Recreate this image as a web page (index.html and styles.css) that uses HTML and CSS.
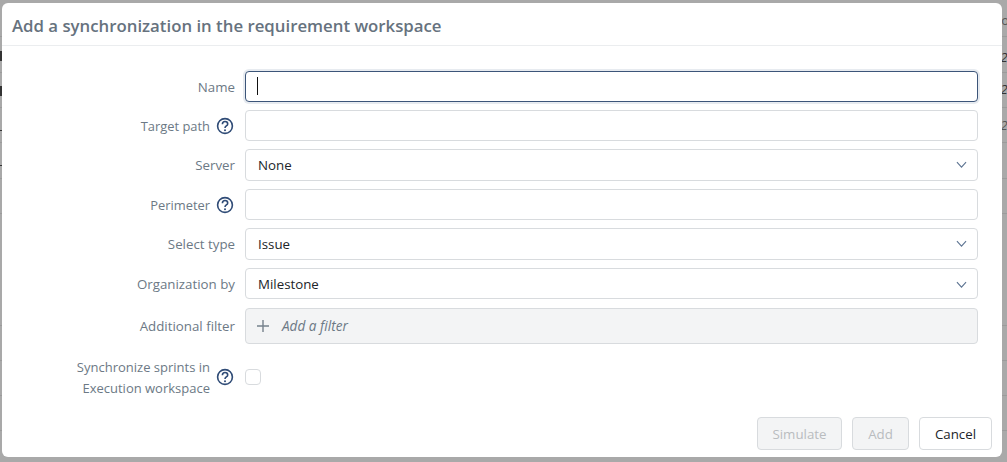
FILE: index.html
```html
<!DOCTYPE html>
<html lang="en">
<head>
<meta charset="utf-8">
<title>Add a synchronization</title>
<link rel="stylesheet" href="styles.css">
</head>
<body>
<div class="backdrop" aria-hidden="true">
  <span class="line l1"></span><span class="line l2"></span><span class="line l3"></span><span class="line l4"></span><span class="line l5"></span><span class="line l6"></span><span class="line l7"></span><span class="line l8"></span><span class="line l9"></span><span class="line l10"></span>
  <span class="frag f1"></span><span class="frag f2"></span><span class="frag f3"></span><span class="frag f4"></span>
  <span class="edge e1">ro</span><span class="edge e2">/2</span><span class="edge e3">/2</span><span class="edge e4">/2</span>
</div>
<div class="modal">
  <header class="modal-head"><h1>Add a synchronization in the requirement workspace</h1></header>
  <form class="modal-body">
    <div class="row row-nudge"><label class="lbl"><span>Name</span></label><div class="control input focus"><span class="caret"></span></div></div>
    <div class="row"><label class="lbl lbl-help"><span>Target path</span><svg class="help" viewBox="0 0 18 18"><circle cx="9" cy="9" r="7.4"/><path d="M6.4 7.2C6.4 5.5 7.6 4.5 9 4.5c1.6 0 2.7 1 2.7 2.4 0 2.1-2.7 2-2.7 4"/><circle class="dot" cx="9" cy="13.2" r="1"/></svg></label><div class="control input"></div></div>
    <div class="row"><label class="lbl"><span>Server</span></label><div class="control input select"><span>None</span><svg class="chev" viewBox="0 0 12 8"><path d="M1 1.2l5 5.6 5-5.6"/></svg></div></div>
    <div class="row"><label class="lbl lbl-help"><span>Perimeter</span><svg class="help" viewBox="0 0 18 18"><circle cx="9" cy="9" r="7.4"/><path d="M6.4 7.2C6.4 5.5 7.6 4.5 9 4.5c1.6 0 2.7 1 2.7 2.4 0 2.1-2.7 2-2.7 4"/><circle class="dot" cx="9" cy="13.2" r="1"/></svg></label><div class="control input"></div></div>
    <div class="row"><label class="lbl"><span>Select type</span></label><div class="control input select"><span>Issue</span><svg class="chev" viewBox="0 0 12 8"><path d="M1 1.2l5 5.6 5-5.6"/></svg></div></div>
    <div class="row row-nudge row-org"><label class="lbl"><span>Organization by</span></label><div class="control input select"><span>Milestone</span><svg class="chev" viewBox="0 0 12 8"><path d="M1 1.2l5 5.6 5-5.6"/></svg></div></div>
    <div class="row row-filter"><label class="lbl"><span>Additional filter</span></label><div class="control filter"><svg class="plus" viewBox="0 0 14 14"><path d="M7 1v12M1 7h12"/></svg><em>Add a filter</em></div></div>
    <div class="row row-check"><label class="lbl lbl-help"><span class="two">Synchronize sprints in<br>Execution workspace</span><svg class="help" viewBox="0 0 18 18"><circle cx="9" cy="9" r="7.4"/><path d="M6.4 7.2C6.4 5.5 7.6 4.5 9 4.5c1.6 0 2.7 1 2.7 2.4 0 2.1-2.7 2-2.7 4"/><circle class="dot" cx="9" cy="13.2" r="1"/></svg></label><div class="check"></div></div>
  </form>
  <footer class="modal-foot">
    <button type="button" class="btn off sim">Simulate</button>
    <button type="button" class="btn off add">Add</button>
    <button type="button" class="btn cancel">Cancel</button>
  </footer>
</div>
</body>
</html>
```
FILE: styles.css
```css
* { box-sizing: border-box; }
html, body { margin: 0; height: 100%; overflow: hidden; }
body {
  background: #a9a9a9;
  font-family: "Open Sans", "Noto Sans", sans-serif;
  font-size: 13.3px;
  padding: 3px 5px 5px 2px;
}
.backdrop { position: absolute; inset: 0; overflow: hidden; }
.line { position: absolute; left: 0; right: 0; height: 1px; background: #9b9b9b; }
.l1 { top: 36px; } .l2 { top: 72px; } .l3 { top: 107px; } .l4 { top: 142px; } .l5 { top: 178px; }
.l6 { top: 213px; } .l7 { top: 325px; } .l8 { top: 360px; } .l9 { top: 395px; } .l10 { top: 430px; }
.frag { position: absolute; left: 0; width: 2px; background: #333; }
.f1 { top: 51px; height: 10px; } .f2 { top: 86px; height: 10px; }
.f3 { top: 130px; height: 1px; } .f4 { top: 165px; height: 1px; }
.edge { position: absolute; left: 996px; font-size: 13px; line-height: 16px; font-style: italic; color: #555; }
.e1 { top: 12px; font-style: normal; } .e2 { top: 49px; color: #333; } .e3 { top: 81px; color: #333; } .e4 { top: 117px; }

.modal {
  position: relative;
  height: 454px;
  background: #fff;
  border-radius: 6px;
  display: flex;
  flex-direction: column;
}
.modal-head { height: 43px; border-bottom: 1px solid #ebedef; padding: 2px 10px 0; display: flex; align-items: center; }
.modal-head h1 { margin: 0; font-size: 16.8px; font-weight: 600; color: #66727e; }
.modal-body { flex: 1; padding: 24.51px 24px 0 0; }

.row { display: flex; margin-bottom: 8px; }
.lbl {
  width: 243px; flex: none; padding-right: 10px;
  display: flex; align-items: center; justify-content: flex-end;
  color: #6c7985; line-height: 20px;
}
.lbl-help { font-size: 12.9px; padding-right: 9px; }
.row-nudge .lbl { padding-top: 2px; }
.row-nudge .input { padding-top: 2px; }
.two { text-align: right; line-height: 21px; font-size: 13px; }
.help { width: 18px; height: 18px; flex: none; margin: 0 2px 0 6px; fill: none; stroke: #2f4b76; stroke-width: 1.6; }
.help .dot { fill: #2f4b76; stroke: none; }
.control { flex: 1; border-radius: 4px; }
.input {
  height: 31.45px; border: 1px solid #d8dbde; background: #fff;
  display: flex; align-items: center; justify-content: space-between;
  padding: 0 10px 0 12px; color: #212529;
}
.focus { border-color: #3c5579; box-shadow: 0 0 0 2px #e7ebf0; }
.caret { width: 1px; height: 18px; background: #111; margin: -2px 0 0 -1px; }
.chev { width: 11px; height: 7.3px; fill: none; stroke: #5d7492; stroke-width: 1.2; }
.filter {
  height: 36px; border: 1px solid #d8dbde; background: #f3f4f5;
  display: flex; align-items: center; padding-left: 10px; color: #6c7985;
}
.filter em { margin-left: 12px; font-size: 13.6px; }
.plus { width: 14px; height: 14px; fill: none; stroke: #76818c; stroke-width: 1.4; }
.row-org { margin-bottom: 8.8px; }
.row-filter { margin-bottom: 13px; }
.row-check { align-items: center; }
.row-check .help { margin-top: -2px; }
.check { width: 16px; height: 16px; border: 1px solid #d8dbde; border-radius: 4px; background: #fff; margin-top: -2px; }
.modal-foot { display: flex; justify-content: flex-end; padding: 0 10px 7px 0; }
.btn {
  height: 33px; border-radius: 4px; font: inherit; padding: 0;
  border: 1px solid #d8dbde; background: #fff; color: #212529;
}
.off { background: #f3f4f5; color: #b9bcbf; }
.sim { width: 85px; margin-right: 10px; }
.add { width: 57px; margin-right: 10px; }
.cancel { width: 73px; }
```
